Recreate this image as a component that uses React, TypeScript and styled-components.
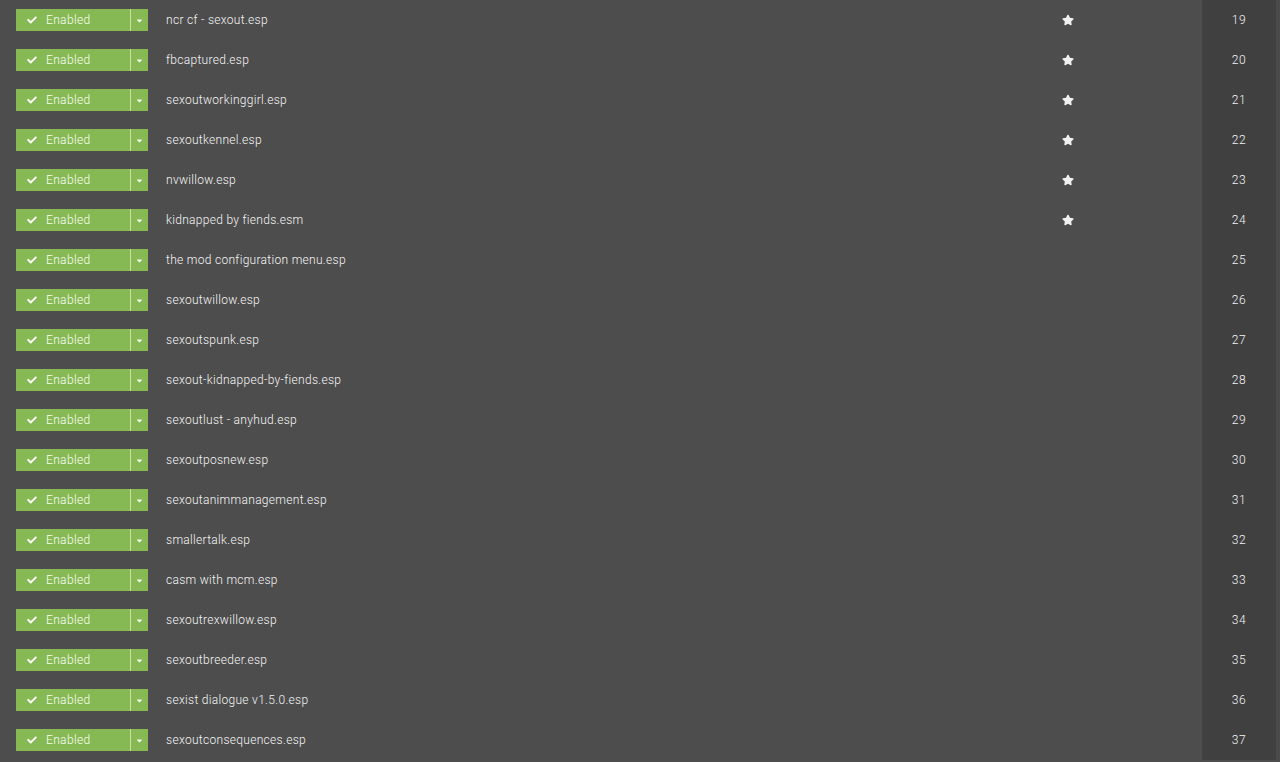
import React from "react";
import styled, { createGlobalStyle } from "styled-components";
import { FaCheck, FaCaretDown, FaStar } from "react-icons/fa";

const Global = createGlobalStyle`
  html, body { margin: 0; padding: 0; background: #4d4d4d; overflow: hidden; }
  body { font-family: Roboto, "Liberation Sans", sans-serif; }
`;

const Table = styled.div`
  width: 1280px;
  height: 762px;
  display: flex;
  flex-direction: column;
  background: #4d4d4d;
`;

const Row = styled.div`
  display: grid;
  grid-template-columns: 166px 874px 56px 106px 74px 4px;
  height: 40px;
  align-items: center;
  flex: none;
`;

const StatusCell = styled.div`
  padding-left: 16px;
  display: flex;
  align-items: center;
`;

const StatusButton = styled.div`
  display: flex;
  width: 132px;
  height: 22px;
  background: #86b953;
  color: #fafdf5;
  font-size: 12px;
  font-weight: 300;
  letter-spacing: 0.35px;
`;

const StatusMain = styled.div`
  width: 115px;
  display: flex;
  align-items: center;
  padding-left: 11px;
  gap: 9px;
  box-sizing: border-box;
  border-right: 1px solid #c8e0ac;
  svg { width: 10px; height: 10px; }
`;

const StatusCaret = styled.div`
  flex: 1;
  display: flex;
  align-items: center;
  justify-content: center;
  svg { width: 9px; height: 9px; }
`;

const Name = styled.div`
  color: #f6f6f6;
  font-size: 12px;
  font-weight: 300;
  letter-spacing: 0.3px;
  white-space: nowrap;
`;

const StarCell = styled.div`
  display: flex;
  justify-content: center;
  color: #f2f2f2;
  svg { width: 12px; height: 12px; }
`;

const Blank = styled.div``;

const Priority = styled.div`
  height: 100%;
  display: flex;
  align-items: center;
  justify-content: center;
  background: #404040;
  color: #f6f6f6;
  font-size: 12px;
  font-weight: 300;
  letter-spacing: 0.5px;
`;

const Edge = styled.div`
  height: 100%;
  background: #4a4a4a;
`;

const mods: [string, boolean][] = [
  ["ncr cf - sexout.esp", true],
  ["fbcaptured.esp", true],
  ["sexoutworkinggirl.esp", true],
  ["sexoutkennel.esp", true],
  ["nvwillow.esp", true],
  ["kidnapped by fiends.esm", true],
  ["the mod configuration menu.esp", false],
  ["sexoutwillow.esp", false],
  ["sexoutspunk.esp", false],
  ["sexout-kidnapped-by-fiends.esp", false],
  ["sexoutlust - anyhud.esp", false],
  ["sexoutposnew.esp", false],
  ["sexoutanimmanagement.esp", false],
  ["smallertalk.esp", false],
  ["casm with mcm.esp", false],
  ["sexoutrexwillow.esp", false],
  ["sexoutbreeder.esp", false],
  ["sexist dialogue v1.5.0.esp", false],
  ["sexoutconsequences.esp", false],
];

export default function App() {
  return (
    <>
      <Global />
      <Table>
        {mods.map(([name, star], i) => (
          <Row key={name}>
            <StatusCell>
              <StatusButton>
                <StatusMain>
                  <FaCheck />
                  <span>Enabled</span>
                </StatusMain>
                <StatusCaret>
                  <FaCaretDown />
                </StatusCaret>
              </StatusButton>
            </StatusCell>
            <Name>{name}</Name>
            <StarCell>{star ? <FaStar /> : null}</StarCell>
            <Blank />
            <Priority>{19 + i}</Priority>
            <Edge />
          </Row>
        ))}
      </Table>
    </>
  );
}
